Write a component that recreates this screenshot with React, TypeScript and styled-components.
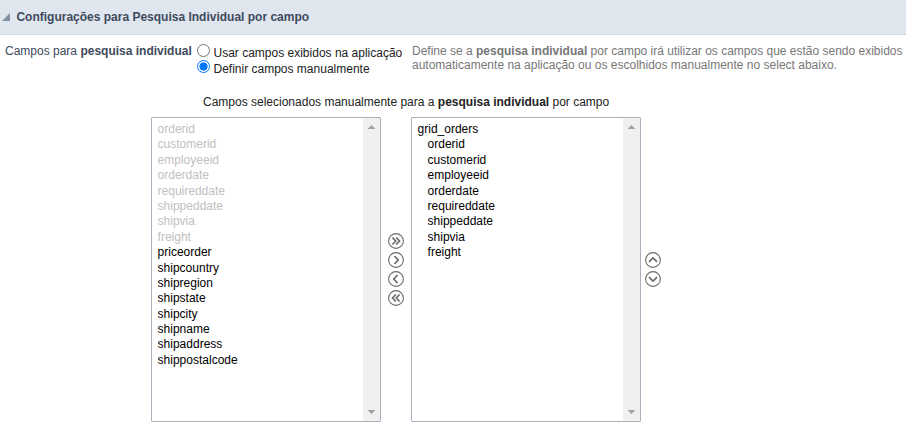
import React, { useState } from "react";
import styled, { createGlobalStyle } from "styled-components";

const GlobalStyle = createGlobalStyle`
  * { box-sizing: border-box; }
  body {
    margin: 0;
    background: #fff;
    font-family: "Liberation Sans", Arial, sans-serif;
    font-size: 12px;
    line-height: 14px;
    overflow: hidden;
  }
`;

const Page = styled.main`
  width: 906px;
  height: 424px;
  overflow: hidden;
  white-space: nowrap;
`;

const Header = styled.header`
  display: flex;
  align-items: center;
  height: 35px;
  padding: 0 0 1px 2px;
  gap: 6.4px;
  background: #dfe6ee;
  border-bottom: 1px solid #cddbe6;
`;

const Title = styled.h1`
  margin: 0;
  font-size: 12px;
  color: #3e4a5d;
`;

const SettingRow = styled.section`
  display: grid;
  grid-template-columns: 191px 216px 1fr;
  height: 60px;
  padding: 9px 0 0 5px;
`;

const Copy = styled.span<{ $color?: string; $spacing?: number }>`
  display: block;
  color: ${(p) => p.$color ?? "#222"};
  letter-spacing: ${(p) => p.$spacing ?? 0}px;
`;

const Options = styled.div`
  display: flex;
  flex-direction: column;
  padding-left: 1px;
`;

const Option = styled.label`
  display: flex;
  height: 16px;
  gap: 3.5px;
  align-items: flex-start;
  ${Copy} { padding-top: 2px; }
`;

const Radio = styled.input`
  appearance: none;
  flex: none;
  width: 13px;
  height: 13px;
  margin: 0;
  border: 1px solid #767676;
  border-radius: 50%;
  background: #fff;
  &:checked {
    border-color: #0075ff;
    background: radial-gradient(circle, #0075ff 0 3.7px, #fff 4.5px);
  }
`;

const Caption = styled.div`
  height: 22px;
  padding-left: 203px;
`;

const Picker = styled.section`
  display: flex;
  padding-left: 151px;
`;

const ListFrame = styled.div`
  display: flex;
  width: 230px;
  height: 305px;
  border: 1px solid #a7b0bc;
  border-radius: 1px;
`;

const List = styled.ul`
  flex: 1;
  margin: 0;
  padding: 4px 0 0 5.6px;
  list-style: none;
`;

const Item = styled.li<{ $muted?: boolean; $nested?: boolean }>`
  height: 15.4px;
  line-height: 15.4px;
  padding-left: ${(p) => (p.$nested ? 10 : 0)}px;
  color: ${(p) => (p.$muted ? "#c0c0c0" : "#000")};
`;

const ScrollTrack = styled.div`
  display: flex;
  flex-direction: column;
  justify-content: space-between;
  align-items: center;
  width: 17px;
  padding: 7px 0;
  background: #f0f0f0;
`;

const Actions = styled.div<{ $top: number; $left: number; $width: number }>`
  display: flex;
  flex-direction: column;
  gap: 3px;
  width: ${(p) => p.$width}px;
  padding: ${(p) => p.$top}px 0 0 ${(p) => p.$left}px;
`;

const ActionButton = styled.button`
  display: block;
  width: 16px;
  height: 16px;
  padding: 0;
  border: 0;
  background: none;
  svg { display: block; }
`;

const icons = {
  all: "M4.4 4.5 7.7 8 4.4 11.5M8.2 4.5 11.5 8 8.2 11.5",
  right: "M6.4 4 10.2 8 6.4 12",
  left: "M9.6 4 5.8 8 9.6 12",
  none: "M7.8 4.5 4.5 8 7.8 11.5M11.6 4.5 8.3 8 11.6 11.5",
  up: "M4 9.8 8 6 12 9.8",
  down: "M4 6.2 8 10 12 6.2",
};

function Action({ name, label }: { name: keyof typeof icons; label: string }) {
  return (
    <ActionButton type="button" aria-label={label}>
      <svg width="16" height="16" viewBox="0 0 16 16" fill="none" stroke="#6a6a6a">
        <circle cx="8" cy="8" r="7.4" strokeWidth="1.1" />
        <path d={icons[name]} strokeWidth="1.7" />
      </svg>
    </ActionButton>
  );
}

function Scroll() {
  return (
    <ScrollTrack>
      <svg width="7" height="4" shapeRendering="crispEdges"><path d="M0 4 3.5 0 7 4Z" fill="#a3a3a3" /></svg>
      <svg width="7" height="4" shapeRendering="crispEdges"><path d="M0 0H7L3.5 4Z" fill="#a3a3a3" /></svg>
    </ScrollTrack>
  );
}

const selected = ["orderid", "customerid", "employeeid", "orderdate", "requireddate", "shippeddate", "shipvia", "freight"];
const available = ["priceorder", "shipcountry", "shipregion", "shipstate", "shipcity", "shipname", "shipaddress", "shippostalcode"];

export default function App() {
  const [manual, setManual] = useState(true);
  return (
    <Page>
      <GlobalStyle />
      <Header>
        <svg width="8" height="8"><path d="M8 0V8H0Z" fill="#8290a4" /></svg>
        <Title>Configurações para Pesquisa Individual por campo</Title>
      </Header>
      <SettingRow>
        <Copy $color="#3e4a5d">Campos para <b>pesquisa individual</b></Copy>
        <Options>
          <Option>
            <Radio type="radio" name="source" checked={!manual} onChange={() => setManual(false)} />
            <Copy>Usar campos exibidos na aplicação</Copy>
          </Option>
          <Option>
            <Radio type="radio" name="source" checked={manual} onChange={() => setManual(true)} />
            <Copy>Definir campos manualmente</Copy>
          </Option>
        </Options>
        <div>
          <Copy $color="#777" $spacing={-0.005}>Define se a <b>pesquisa individual</b> por campo irá utilizar os campos que estão sendo exibidos</Copy>
          <Copy $color="#777">automaticamente na aplicação ou os escolhidos manualmente no select abaixo.</Copy>
        </div>
      </SettingRow>
      <Caption>
        <Copy>Campos selecionados manualmente para a <b>pesquisa individual</b> por campo</Copy>
      </Caption>
      <Picker>
        <ListFrame>
          <List>
            {selected.map((name) => <Item key={name} $muted>{name}</Item>)}
            {available.map((name) => <Item key={name}>{name}</Item>)}
          </List>
          <Scroll />
        </ListFrame>
        <Actions $top={116} $left={7} $width={30}>
          <Action name="all" label="Adicionar todos" />
          <Action name="right" label="Adicionar" />
          <Action name="left" label="Remover" />
          <Action name="none" label="Remover todos" />
        </Actions>
        <ListFrame>
          <List>
            <Item>grid_orders</Item>
            {selected.map((name) => <Item key={name} $nested>{name}</Item>)}
          </List>
          <Scroll />
        </ListFrame>
        <Actions $top={135} $left={4} $width={24}>
          <Action name="up" label="Mover para cima" />
          <Action name="down" label="Mover para baixo" />
        </Actions>
      </Picker>
    </Page>
  );
}
